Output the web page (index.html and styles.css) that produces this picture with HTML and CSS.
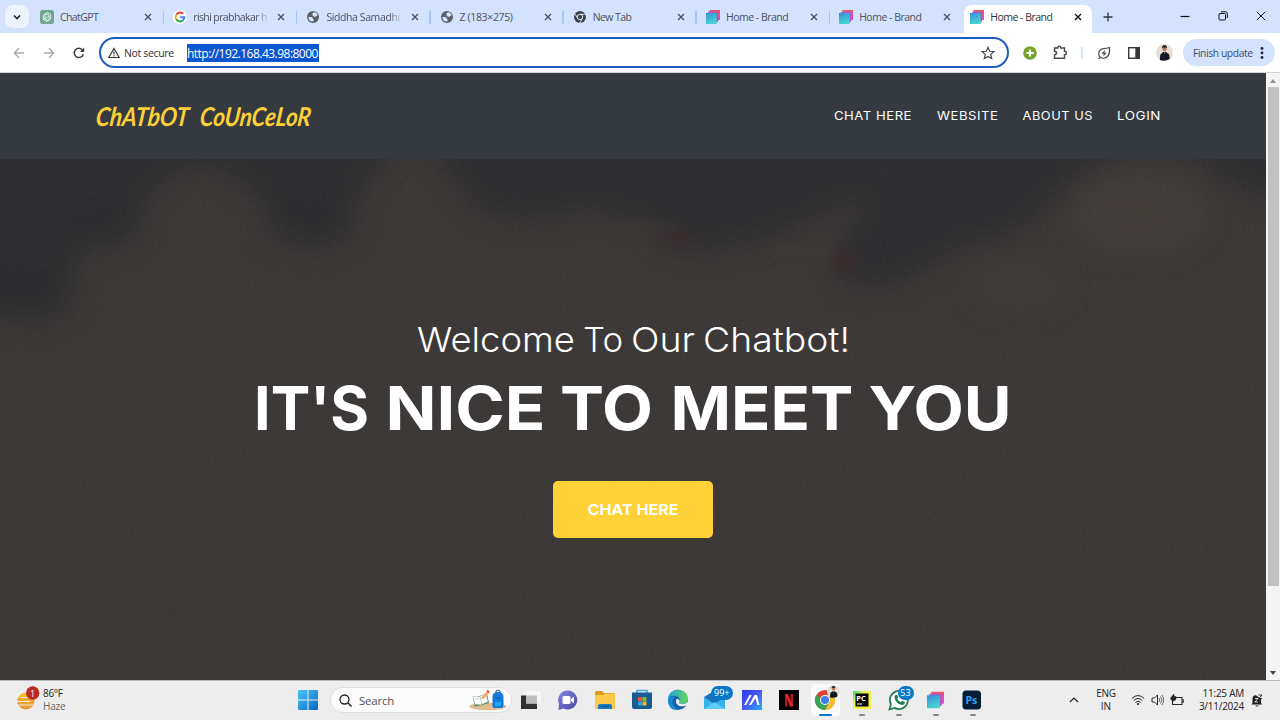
FILE: index.html
```html
<!DOCTYPE html>
<html lang="en">
<head>
<meta charset="utf-8">
<title>Home - Brand</title>
<link rel="stylesheet" href="styles.css">
</head>
<body>
<svg width="0" height="0" class="defs">
  <defs>
    <linearGradient id="gBrand" x1="0" y1="0" x2="0.4" y2="1"><stop offset="0" stop-color="#348fd8"/><stop offset="1" stop-color="#46d4cf"/></linearGradient>
    <linearGradient id="gPink" x1="0" y1="0" x2="1" y2="1"><stop offset="0" stop-color="#e8566b"/><stop offset=".5" stop-color="#e8566b"/><stop offset="1" stop-color="#d04ce0"/></linearGradient>
    <linearGradient id="gWin" x1="0" y1="0" x2="1" y2="1"><stop offset="0" stop-color="#4cc6f7"/><stop offset="1" stop-color="#0669c4"/></linearGradient>
    <linearGradient id="gSun" x1="0" y1="0" x2="0" y2="1"><stop offset="0" stop-color="#f9c62e"/><stop offset="1" stop-color="#e9861d"/></linearGradient>
    <linearGradient id="gPurple" x1="0" y1="0" x2="1" y2="1"><stop offset="0" stop-color="#8088dd"/><stop offset="1" stop-color="#4f45a6"/></linearGradient>
    <linearGradient id="gEdge" x1="0" y1="0" x2="1" y2="0"><stop offset="0" stop-color="#1c9ee0"/><stop offset="1" stop-color="#66d75c"/></linearGradient>
    <linearGradient id="gAsus" x1="0" y1="0" x2="1" y2="1"><stop offset="0" stop-color="#2a3df0"/><stop offset="0.5" stop-color="#4758f5"/><stop offset="1" stop-color="#25b0f5"/></linearGradient>
    <linearGradient id="gPc" x1="0" y1="0" x2="1" y2="1"><stop offset="0" stop-color="#3bd98a"/><stop offset="0.35" stop-color="#e9f04a"/><stop offset="1" stop-color="#f5f04a"/></linearGradient>
    <symbol id="brand" viewBox="0 0 14 14"><path d="M3.500 0H14V10H3.500z" fill="url(#gPink)"/><path d="M2 1.800h10V12H2z" fill="#a458cf"/><path d="M0 3h10.700v11H0z" fill="url(#gBrand)"/></symbol>
    <symbol id="close" viewBox="0 0 8 8"><path d="M1 1l6 6M7 1L1 7" stroke="currentColor" stroke-width="1.400" fill="none"/></symbol>
    <symbol id="globe" viewBox="0 0 14 14"><circle cx="7" cy="7" r="6" fill="#5b6069"/><path d="M2.300 7h3.200q1 .1 1 1t1 1v2.500Q3 12 2.300 7zM6.500 3.500q1-1.500 2.500-1.300 2.200 1 2.700 2.800L9.500 6.800H7.800q0-1-1.300-1.200z" fill="#d3e2fd"/></symbol>
    <symbol id="person" viewBox="0 0 18 18"><circle cx="9" cy="9" r="9" fill="#e6dfd8"/><path d="M4 17l.6-6L7.600 8.500h3L14 11l.5 5q-5 3-10.500 1z" fill="#131824"/><circle cx="9" cy="5.300" r="2.200" fill="#b57858"/><path d="M6.500 5Q6 1.200 9.200 1.400 12 1.400 11.400 5L10.500 3.800H7.500z" fill="#171213"/><path d="M8.200 8l.8 3 .9-3z" fill="#b57858"/></symbol>
  </defs>
</svg>

<div class="screen">
  <header class="tabstrip">
    <div class="tab-search"><svg width="8" height="8" viewBox="0 0 8 8"><path d="M1 2.500l3 3 3-3" stroke="#1d2026" stroke-width="1.600" fill="none"/></svg></div>
    <div class="tab"><svg class="fav" viewBox="0 0 14 14"><rect width="14" height="14" rx="2.500" fill="#74a594"/><g fill="none" stroke="#eef8f4" stroke-width=".9"><path d="M5 4.200v4.500l3.500 2M7 2.600l3.700 2.200v4M5 4.200L7 2.600M10.700 8.800L8.500 10.700M3.300 5.500v4L7 11.500 9 9.700V5.500L5.500 3.700M3.300 5.500L5 4.200M3.300 9.500L9 6.200"/></g></svg><span class="title w-a">ChatGPT</span><svg class="x"><use href="#close"/></svg></div>
    <div class="tab"><svg class="fav" viewBox="0 0 14 14"><circle cx="7" cy="7" r="7" fill="#fff"/><g fill="none" stroke-width="2"><path d="M10.200 3.700A4.400 4.400 0 0 0 3.200 4.800" stroke="#e24236"/><path d="M3.200 4.800A4.400 4.400 0 0 0 3.200 9.200" stroke="#f3b71c"/><path d="M3.200 9.200A4.400 4.400 0 0 0 9.800 10.400" stroke="#36a455"/><path d="M9.800 10.400A4.400 4.400 0 0 0 11.400 7.200H7.200" stroke="#4280ee"/></g></svg><span class="title fade w-b">rishi prabhakar h</span><svg class="x"><use href="#close"/></svg></div>
    <div class="tab"><svg class="fav"><use href="#globe"/></svg><span class="title fade w-c">Siddha Samadhi</span><svg class="x"><use href="#close"/></svg></div>
    <div class="tab"><svg class="fav"><use href="#globe"/></svg><span class="title w-d">Z (183×275)</span><svg class="x"><use href="#close"/></svg></div>
    <div class="tab"><svg class="fav" viewBox="0 0 14 14"><circle cx="7" cy="7" r="6" fill="#3d434b"/><circle cx="7" cy="7" r="2.700" fill="none" stroke="#d3e2fd"/><path d="M7 4.300h5.400M4.700 8.300L2 3.800M9.300 8.300L6.800 13" stroke="#d3e2fd"/></svg><span class="title w-f">New Tab</span><svg class="x"><use href="#close"/></svg></div>
    <div class="tab"><svg class="fav"><use href="#brand"/></svg><span class="title w-e">Home - Brand</span><svg class="x"><use href="#close"/></svg></div>
    <div class="tab nosep"><svg class="fav"><use href="#brand"/></svg><span class="title w-e">Home - Brand</span><svg class="x"><use href="#close"/></svg></div>
    <div class="tab active"><svg class="fav"><use href="#brand"/></svg><span class="title w-e">Home - Brand</span><svg class="x"><use href="#close"/></svg></div>
    <svg class="plus" width="10" height="10" viewBox="0 0 10 10"><path d="M5 .5v9M.5 5h9" stroke="#30353d" stroke-width="1.300"/></svg>
    <div class="wincontrols">
      <svg width="10" height="10" viewBox="0 0 10 10"><path d="M.5 5.500h9" stroke="#111" stroke-width="1.200"/></svg>
      <svg width="10" height="10" viewBox="0 0 10 10"><rect x="1" y="2.500" width="6.500" height="6.500" rx="1" fill="none" stroke="#111"/><path d="M3 .8h4.500q1.800 0 1.800 1.800V7" fill="none" stroke="#111"/></svg>
      <svg width="10" height="10" viewBox="0 0 10 10"><path d="M.8.8l8.400 8.400M9.200.8L.8 9.200" stroke="#111"/></svg>
    </div>
  </header>

  <div class="toolbar">
    <div class="nav">
      <svg width="12" height="12" viewBox="0 0 12 12"><path d="M11 6H1.500M6 1.300L1.300 6 6 10.700" stroke="#a6a9ad" stroke-width="1.300" fill="none"/></svg>
      <svg width="12" height="12" viewBox="0 0 12 12"><path d="M1 6h9.500M6 1.300L10.700 6 6 10.700" stroke="#a6a9ad" stroke-width="1.300" fill="none"/></svg>
      <svg width="12" height="12" viewBox="0 0 12 12"><path d="M10.300 7.200A4.600 4.600 0 1 1 9.400 3" stroke="#3b3e42" stroke-width="1.500" fill="none"/><path d="M11.200.6v4.300H7z" fill="#3b3e42"/></svg>
    </div>
    <div class="omnibox">
      <svg width="12" height="12" viewBox="0 0 12 12"><path d="M6 1.500L11.200 10.500H.8z" fill="none" stroke="#2e3135" stroke-width="1.200"/><path d="M6 4.500v3M6 8.200v1.200" stroke="#2e3135" stroke-width="1.100"/></svg>
      <span class="secure">Not secure</span>
      <span class="url">http://192.168.43.98:8000</span>
      <svg class="star" width="14" height="14" viewBox="0 0 14 14"><path d="M7 1.300l1.700 4 4.200.3-3.200 2.800 1 4.200L7 10.400l-3.700 2.200 1-4.200L1.100 5.600l4.200-.3z" fill="none" stroke="#44474b" stroke-width="1.200"/></svg>
    </div>
    <div class="tools">
      <svg width="14" height="14" viewBox="0 0 14 14"><circle cx="7" cy="7" r="6.800" fill="#78a22f"/><path d="M7 3.400v7.200M3.400 7h7.200" stroke="#fff" stroke-width="2"/></svg>
      <svg class="puzzle" width="15" height="15" viewBox="0 0 15 15"><path d="M1.500 3H4.700Q4.700 1.300 6.200 1.300T7.800 3H11.500v3.300q2 .2 2 1.700t-2 1.700v3.600H1.500V10Q3.500 9.800 3.500 8.100T1.500 6.300z" fill="none" stroke="#484b50" stroke-width="1.500"/></svg>
      <i class="divider"></i>
      <svg class="leaf" width="14" height="14" viewBox="0 0 14 14"><path d="M12.500 1.500Q13 7 11 10 8.500 13 5 12 1.500 10.800 1.800 7.500 2 3.500 6 2.700q4-.2 6.500-1.200zM3.500 11L1.500 13" fill="none" stroke="#484b50" stroke-width="1.200"/><path d="M8 4L4.500 7.700l2.300.1-.5 2.700L9.700 6.700l-2.300-.2z" fill="#484b50"/></svg>
      <svg class="panel" width="12" height="12" viewBox="0 0 12 12"><rect x=".7" y=".7" width="10.600" height="10.600" fill="none" stroke="#34373b" stroke-width="1.400"/><path d="M7.300 1H11v10H7.300z" fill="#34373b"/></svg>
      <svg class="avatar" width="17" height="17"><use href="#person"/></svg>
      <div class="update"><span>Finish update</span><svg width="4" height="12" viewBox="0 0 4 12"><g fill="#1e2a44"><circle cx="2" cy="1.500" r="1.400"/><circle cx="2" cy="6" r="1.400"/><circle cx="2" cy="10.500" r="1.400"/></g></svg></div>
    </div>
  </div>

  <div class="viewport">
    <main class="page">
      <nav class="site-nav">
        <svg class="brand" width="222" height="40" viewBox="0 0 222 40"><g transform="translate(-1 28.500) skewX(-7)"><text x="0" textLength="93" lengthAdjust="spacingAndGlyphs">ChATbOT</text><text x="104" textLength="111" lengthAdjust="spacingAndGlyphs">CoUnCeLoR</text></g></svg>
        <svg class="links" width="330" height="20" viewBox="0 0 330 20"><text x="1" y="13" textLength="78" lengthAdjust="spacingAndGlyphs">CHAT HERE</text><text x="104" y="13" textLength="61.500" lengthAdjust="spacingAndGlyphs">WEBSITE</text><text x="189.500" y="13" textLength="70.500" lengthAdjust="spacingAndGlyphs">ABOUT US</text><text x="284" y="13" textLength="44" lengthAdjust="spacingAndGlyphs">LOGIN</text></svg>
      </nav>
      <section class="hero">
        <svg class="backdrop" viewBox="0 159 1266 521" preserveAspectRatio="none">
          <defs>
            <filter id="soft" x="-20%" y="-20%" width="140%" height="140%" color-interpolation-filters="sRGB"><feGaussianBlur stdDeviation="13"/></filter>
            <filter id="spot" x="-100%" y="-100%" width="300%" height="300%" color-interpolation-filters="sRGB"><feGaussianBlur stdDeviation="6"/></filter>
            <filter id="grain" x="0" y="0" width="100%" height="100%" color-interpolation-filters="sRGB"><feTurbulence type="fractalNoise" baseFrequency=".35 .5" numOctaves="3" seed="4"/><feColorMatrix values=".5 0 0 0 .1  .5 0 0 0 .1  .5 0 0 0 .09  0 0 0 0 1"/></filter>
          </defs>
          <rect y="159" width="1266" height="521" fill="#3b3736"/>
          <g filter="url(#soft)">
            <path d="M-40 100H1310V200L1240 190 1200 155 1140 145 1085 165 1050 200 1010 235 960 245 900 282 850 285 838 265 845 235 870 205 860 195 825 212 785 232 710 250 670 245 650 220 590 208 530 220 480 210 450 170 430 140 390 150 360 185 348 235 315 248 285 235 255 190 220 168 180 165 145 195 135 235 110 248 85 245 75 260 72 300 40 322 10 315-40 320z" fill="#2c2b2e"/>
            <path d="M75 240h55v-35H60zM270 240h65v-45h-70zM-10 310h70v-50H-10z" fill="#29292d" opacity=".6"/>
            <ellipse cx="1140" cy="215" rx="65" ry="38" fill="#46413c" opacity=".65"/>
            <ellipse cx="1020" cy="285" rx="45" ry="25" fill="#413c39" opacity=".6"/>
          </g>
          <g filter="url(#spot)"><ellipse cx="678" cy="237" rx="14" ry="8" fill="#3f292b" opacity=".65"/><ellipse cx="845" cy="262" rx="13" ry="10" fill="#3d282b" opacity=".65"/><path d="M615 228h60M770 250h60" stroke="#403b39" stroke-width="4"/></g>
          <rect y="159" width="1266" height="521" filter="url(#grain)" opacity=".06"/>
        </svg>
        <div class="copy">
          <svg class="lead" width="440" height="46" viewBox="0 0 440 46"><text x="4" y="35" textLength="158" lengthAdjust="spacingAndGlyphs">Welcome</text><text x="170" y="35" textLength="40" lengthAdjust="spacingAndGlyphs">To</text><text x="218" y="35" textLength="64" lengthAdjust="spacingAndGlyphs">Our</text><text x="290" y="35" textLength="147" lengthAdjust="spacingAndGlyphs">Chatbot!</text></svg>
          <svg class="headline" width="766" height="90" viewBox="0 0 766 90"><text x="4" y="67" textLength="115" lengthAdjust="spacingAndGlyphs">IT'S</text><text x="135.500" y="67" textLength="160" lengthAdjust="spacingAndGlyphs">NICE</text><text x="310" y="67" textLength="93" lengthAdjust="spacingAndGlyphs">TO</text><text x="420.500" y="67" textLength="183" lengthAdjust="spacingAndGlyphs">MEET</text><text x="618.500" y="67" textLength="143" lengthAdjust="spacingAndGlyphs">YOU</text></svg>
          <a class="cta"><svg width="92" height="20" viewBox="0 0 92 20"><text x=".5" y="15" textLength="91" lengthAdjust="spacingAndGlyphs">CHAT HERE</text></svg></a>
        </div>
      </section>
    </main>
    <aside class="scrollbar">
      <svg width="6" height="4" viewBox="0 0 6 4"><path d="M0 4l3-4 3 4z" fill="#929292"/></svg>
      <i class="thumb"></i>
      <svg width="6" height="4" viewBox="0 0 6 4"><path d="M0 0l3 4 3-4z" fill="#444"/></svg>
    </aside>
  </div>

  <footer class="taskbar">
    <div class="weather">
      <svg width="24" height="25" viewBox="0 0 24 25"><circle cx="10" cy="15" r="8.500" fill="url(#gSun)"/><path d="M0 15.500h14M3 19h16M5 11.500h12" stroke="#ededed" stroke-width="1"/><path d="M1 13.500h15M1 17.300h17M4 21h11" stroke="#e5a542" stroke-width="1.300"/><circle cx="16.700" cy="7" r="6.700" fill="#bd2a22"/><text x="16.700" y="10.500" text-anchor="middle" class="badge-text">1</text></svg>
      <div class="stack"><span class="temp">86°F</span><span class="haze">Haze</span></div>
    </div>
    <div class="start"><svg width="20" height="20" viewBox="0 0 20 20"><path d="M0 1Q0 0 1 0h8.500v9.500H0zM10.500 0H19q1 0 1 1v8.500h-9.500zM0 10.500h9.500V20H1q-1 0-1-1zM10.500 10.500H20V19q0 1-1 1h-8.500z" fill="url(#gWin)"/></svg></div>
    <div class="search">
      <svg width="13" height="13" viewBox="0 0 13 13"><circle cx="5.500" cy="5.500" r="4.500" fill="none" stroke="#222" stroke-width="1.300"/><path d="M8.800 8.800l3.700 3.700" stroke="#222" stroke-width="1.500"/></svg>
      <span>Search</span>
      <svg class="art" width="38" height="22" viewBox="0 0 38 22"><ellipse cx="19" cy="17.500" rx="18.500" ry="3.800" fill="#e0bd91"/><path d="M4 9l7-2 7-2 2 9-7 2-7 1.500z" fill="#438458"/><path d="M4 7.500l6 .2 7-3 2 8-7 3-6-.3z" fill="#fff" stroke="#a5b0b4" stroke-width=".6"/><path d="M11 7.700l2 8M6 10l4-.3M12.500 9l4-1.500" stroke="#9aa7aa" stroke-width=".6"/><path d="M12 9l6.500-7 2 1.500L14 10z" fill="#f4a64a"/><path d="M17.500 2.500l1-1.500 2 1-.5 2z" fill="#e64b45"/><path d="M23.500 8q0-5 5.500-5t5.500 5v9q0 2-2 2h-7q-2 0-2-2z" fill="#1679dd"/><path d="M27 4V2q2-2 4 0v2" fill="none" stroke="#175395"/><path d="M26 13h6v4h-6z" fill="#23a8f1"/><path d="M26 9h6" stroke="#075ab0"/></svg>
    </div>
    <div class="apps">
      <div class="app"><svg viewBox="0 0 30 30"><path d="M5 10.500h16V24H5z" fill="#303132"/><path d="M10 6h15v12.500H10z" fill="#f6f6f6"/><path d="M10 10.500h11v8H10z" fill="#bdbdbd"/></svg></div>
      <div class="app"><svg viewBox="0 0 30 30"><path d="M15 5.500a9.500 9.500 0 1 1-4.500 18L5.500 25l.5-6A9.500 9.500 0 0 1 15 5.500z" fill="url(#gPurple)"/><rect x="9.500" y="11" width="8" height="8" rx="1.500" fill="#fff"/><path d="M18 14l3-2.500v7L18 16z" fill="#fff"/></svg></div>
      <div class="app"><svg viewBox="0 0 30 30"><path d="M5 7q0-1 1-1h6l2 2h10q1 0 1 1v3H5z" fill="#dc9c1c"/><path d="M5 10h8l2-1.500h10V23q0 1-1 1H6q-1 0-1-1z" fill="#fac94a"/><path d="M8 24v-3q0-2 2-2h10q2 0 2 2v3z" fill="#197bc4"/><path d="M11 21.500h8" stroke="#0a5291" stroke-width="1.300"/></svg></div>
      <div class="app"><svg viewBox="0 0 30 30"><path d="M10 9V5.500h10V9" fill="none" stroke="#36a9df" stroke-width="1.500"/><path d="M5 7.500h20V22q0 2-2 2H7q-2 0-2-2z" fill="#175b92"/><path d="M11 12h4v4h-4z" fill="#ef5331"/><path d="M15.500 12h4v4h-4z" fill="#83bd30"/><path d="M11 16.500h4v4h-4z" fill="#29a8e7"/><path d="M15.500 16.500h4v4h-4z" fill="#f7b92d"/></svg></div>
      <div class="app"><svg viewBox="0 0 30 30"><circle cx="15" cy="15" r="10" fill="#1463ab"/><path d="M5 15A10 10 0 0 1 25 14Q25 19 19 19q-4 0-2.500-2.500Q18 13 13 11 7 10 5 15z" fill="url(#gEdge)"/><path d="M5 15Q7 10 12 12 8 15 10 20 12 24 16 25 5 26 5 15z" fill="#188bd6"/><path d="M13.500 14q-2 5 3 7 4 1 7.500-1l2 1V14.500Q25 19 19 19q-4 0-2.500-2.500.5-2-1.500-2.500z" fill="#ededed"/></svg></div>
      <div class="app"><svg viewBox="0 0 30 30"><path d="M4 12L14 6l11 6v12H4z" fill="#1672ba"/><path d="M4 12h21v12H4z" fill="#36b2ed"/><path d="M4 12l10.500 7L25 12z" fill="#1672ba"/><path d="M4 24l10.500-7L25 24z" fill="#61cbf5"/></svg><b class="badge wide">99+</b></div>
      <div class="app"><svg viewBox="0 0 30 30"><path d="M5 5h20v20H5z" fill="url(#gAsus)"/><path d="M7 20l5.500-10h2.200L9.200 20zM12 20l5.500-10h2.500l2.500 10h-2.200l-1.800-7-4.300 7z" fill="#fff"/></svg></div>
      <div class="app"><svg viewBox="0 0 30 30"><path d="M5 5h20v20H5z" fill="#050303"/><path d="M11 9h2.500v12.500H11zM16.500 9H19v12.500h-2.500z" fill="#b41820"/><path d="M11 9h2.700L19 21.500h-2.700z" fill="#e72630"/></svg></div>
      <div class="app running current"><svg viewBox="0 0 30 30"><circle cx="15" cy="15" r="10" fill="#e14034"/><path d="M15 15L6.300 10A10 10 0 0 0 15 25l5-9z" fill="#36a452"/><path d="M15 10h8.700A10 10 0 0 1 15 25l4.500-8z" fill="#f6bf2b"/><circle cx="15" cy="15" r="5" fill="#fff"/><circle cx="15" cy="15" r="4" fill="#3f7fe6"/></svg><svg class="mini"><use href="#person"/></svg></div>
      <div class="app running"><svg viewBox="0 0 30 30"><path d="M6 6h18v18H6z" fill="url(#gPc)"/><path d="M8.500 8.500h13v13h-13z" fill="#080908"/><path d="M10 19h5" stroke="#fff"/><text x="9.300" y="15.500" class="pc">PC</text></svg></div>
      <div class="app running"><svg viewBox="0 0 30 30"><path d="M5.500 24.500l1.400-5.300a9 9 0 1 1 3.600 3.700z" fill="#fff" stroke="#277b52" stroke-width="1.800"/><path d="M11.500 10q1-.8 1.800.2l1 2-1 1.500q1 2.500 3.600 3.300l1.500-1.300 2.400 1.200q.2 3-2.800 3Q11 18.500 10.500 12q0-1.200 1-2z" fill="#277b52"/></svg><b class="badge">53</b></div>
      <div class="app running"><svg viewBox="0 0 30 30"><use href="#brand" x="6" y="6.500" width="17" height="17"/></svg></div>
      <div class="app running"><svg viewBox="0 0 30 30"><rect x="5.500" y="5.500" width="18.500" height="19" rx="3.500" fill="#061d35"/><text x="8.500" y="18.500" class="ps">Ps</text></svg></div>
    </div>
    <div class="tray">
      <svg class="chev" width="10" height="6" viewBox="0 0 10 6"><path d="M1 5l4-4 4 4" fill="none" stroke="#222" stroke-width="1.200"/></svg>
      <div class="lang"><span class="eng">ENG</span><span>IN</span></div>
      <div class="status">
        <svg width="14" height="12" viewBox="0 0 14 12"><g fill="none" stroke="#292929"><path d="M.8 4.500Q7-1.500 13.200 4.500M2.700 6.500Q7 2.500 11.300 6.500M4.500 8.400Q7 6 9.500 8.400"/></g><circle cx="7" cy="10" r="1.100" fill="#292929"/></svg>
        <svg width="13" height="12" viewBox="0 0 13 12"><path d="M1 4h2.500L6.500 1v10L3.500 8H1z" fill="none" stroke="#292929"/><path d="M8 4q1.500 2 0 4M9.500 2.500q3 3.500 0 7M11 1q3.500 5 0 10" fill="none" stroke="#444" stroke-width=".8"/></svg>
        <svg width="14" height="12" viewBox="0 0 14 12"><path d="M5 3.500h7v7H2.500V7" fill="none" stroke="#292929" stroke-width="1.100"/><path d="M12.500 5.500h1v3h-1M1 3.500L4 0v2.500h2V5Q5 7.500 2.500 7L.5 5z" fill="#222" stroke="#222" stroke-width=".5"/></svg>
      </div>
      <div class="clock"><span class="time">11:25 AM</span><span class="date">3/11/2024</span></div>
      <svg class="bell" width="12" height="13" viewBox="0 0 12 13"><path d="M1.500 9V5Q1.500 1 5 1.300L10 5v4l1.200 1.500H.5z" fill="#222"/><path d="M4 11.500h4q-2 2-4 0z" fill="#222"/><path d="M4 4.500h3L4 8h3" stroke="#fff" fill="none" stroke-width=".8"/><path d="M7.500 1H11L8 4.500h3" stroke="#222" fill="none" stroke-width=".9"/></svg>
    </div>
  </footer>
</div>
</body>
</html>
```
FILE: styles.css
```css
* { box-sizing: border-box; }
body { margin: 0; overflow: hidden; font-family: "Open Sans", "Noto Sans", sans-serif; }
svg { display: block; flex: none; }
.defs { position: absolute; }
.screen { width: 1280px; height: 720px; display: grid; grid-template-rows: 33px 40px 607px 40px; background: #fff; }

.tabstrip { background: #d3e2fd; display: flex; padding-left: 5px; }
.tab-search { width: 24px; height: 23px; margin: 5px 2px 0 0; border-radius: 8px; background: #edf3fe; display: grid; place-items: center; }
.tab { width: 133.2px; display: flex; align-items: center; padding: 1px 12px 0 9px; position: relative; color: #4c525e; flex: none; }
.tab::after { content: ""; position: absolute; right: 0; top: 11px; width: 1.5px; height: 13px; background: #a9c7fa; }
.tab.nosep::after, .tab.active::after { display: none; }
.fav { width: 14px; height: 14px; }
.title { flex: none; margin-left: 6px; width: 76px; font-size: 10.5px; line-height: 16px; white-space: nowrap; }
.x { width: 8px; height: 8px; margin-left: auto; }
.fade { -webkit-mask-image: linear-gradient(90deg, #000 82%, transparent 102%); }
.w-a { letter-spacing: -.6px; }
.w-b { letter-spacing: -.6px; }
.w-c { letter-spacing: -.4px; }
.w-d { letter-spacing: -.36px; }
.w-e { letter-spacing: -.5px; }
.w-f { letter-spacing: -.6px; }
.tab.active { width: 128px; margin-left: .9px; margin-top: 5px; padding: 0 10px 4px 6px; background: #fff; border-radius: 8px 8px 0 0; color: #30343b; }
.active .x { color: #111; }
.plus { margin: 12px 0 0 11px; }
.wincontrols { margin: 11px 14px 0 auto; display: flex; gap: 28.500px; }
.wincontrols svg:first-child { margin-right: -1px; }

.toolbar { display: flex; align-items: center; background: #fff; border-bottom: 1px solid #cfd2d6; }
.nav { display: flex; gap: 18px; padding-left: 12.500px; width: 99px; }
.omnibox { width: 910px; height: 31px; border: 2px solid #1f5bc4; border-radius: 16px; display: flex; align-items: center; padding: 0 12px 0 7px; color: #30343a; }
.secure { margin-left: 4px; width: 63px; font-size: 10.5px; letter-spacing: -.35px; white-space: nowrap; }
.url { height: 18px; line-height: 19px; width: 132px; background: #0b57d0; color: #fff; font-size: 12px; letter-spacing: -.52px; white-space: nowrap; }
.star { margin-left: auto; }
.tools { display: flex; align-items: center; padding-left: 14px; }
.puzzle { margin-left: 16px; }
.divider { width: 2px; height: 12px; background: #d5e3fb; margin-left: 13px; }
.leaf { margin-left: 14px; }
.panel { margin-left: 17px; }
.avatar { margin-left: 16px; }
.update { width: 92px; height: 27px; border-radius: 14px; margin-left: 10px; background: #d3e2fd; color: #3e4b6e; display: flex; align-items: center; padding: 0 11px 0 10px; justify-content: space-between; font-size: 10.3px; letter-spacing: -.4px; white-space: nowrap; }

.viewport { display: grid; grid-template-columns: 1266px 14px; }
.page { display: grid; grid-template-rows: 86px 521px; }
.site-nav { background: #343a40; display: flex; align-items: center; justify-content: space-between; padding: 0 103px 0 96px; border-top: 1px solid #3b3f45; }
.brand { overflow: visible; }
.brand text { fill: #fdd037; font: italic 700 26px "Lato", sans-serif; }
.links text { fill: #fff; font: 400 12px "Inter", sans-serif; letter-spacing: .5px; }
.hero { display: grid; }
.backdrop { grid-area: 1 / 1; width: 1266px; height: 521px; }
.copy { grid-area: 1 / 1; z-index: 1; display: flex; flex-direction: column; align-items: center; padding-top: 158px; }
.copy text { fill: #fff; font-family: "Inter", sans-serif; }
.lead text { font-size: 34px; font-weight: 300; }
.headline text { font-size: 61px; font-weight: 700; }
.cta { width: 160px; height: 57px; margin-top: 28px; border-radius: 5px; background: #fed136; display: grid; place-items: center; }
.cta text { font-size: 15px; font-weight: 700; }
.scrollbar { background: #f4f4f4; display: flex; flex-direction: column; align-items: center; padding: 6px 0 5px; }
.thumb { width: 11px; height: 499px; margin-top: 4px; background: #c1c1c1; }
.scrollbar svg:last-child { margin-top: auto; }

.taskbar { background: #ededed; border-top: 1px solid #bbb7bb; display: flex; align-items: center; color: #222; white-space: nowrap; padding-bottom: 1px; }
.weather { width: 298px; padding-left: 16px; display: flex; align-items: center; gap: 3px; }
.weather svg { margin-top: -4px; }
.stack, .lang, .clock { display: flex; flex-direction: column; font-size: 10px; line-height: 13px; }
.temp { letter-spacing: -.3px; }
.haze { color: #666; letter-spacing: -.2px; }
.badge-text { font: 9px "Open Sans", sans-serif; fill: #fff; }
.start { width: 32px; }
.search { width: 182px; height: 26px; border-radius: 13px; background: #fbfbfb; border: 1px solid #dfdfdf; display: flex; align-items: center; padding: 0 4px 0 8px; font-size: 11.500px; color: #555; }
.search span { margin-left: 7px; letter-spacing: -.2px; }
.art { margin-left: auto; }
.apps { display: grid; grid-template-columns: repeat(13, 36.750px); width: 478px; margin-left: 1px; }
.app { height: 32px; display: grid; place-items: center; position: relative; }
.app > svg:first-child { width: 30px; height: 30px; }
.current::before { content: ""; position: absolute; inset: 0 4px; border-radius: 4px; background: #fafafa; }
.current svg { position: relative; }
.running::after { content: ""; position: absolute; bottom: 0; left: 15.500px; width: 6px; height: 2px; border-radius: 1px; background: #888; }
.current::after { left: 12px; width: 13px; background: #0877c6; height: 2.500px; }
.app .mini { position: absolute; width: 13px; height: 13px; right: 4px; top: 1px; }
.badge { position: absolute; top: 2px; left: 17px; width: 16px; height: 14px; border-radius: 7px; background: #0877c6; color: #fff; font-size: 9px; line-height: 14px; font-weight: 400; text-align: center; }
.badge.wide { left: 14px; width: 22px; }
.pc { font: 700 7.500px "Open Sans", sans-serif; fill: #fff; }
.ps { font: 700 10.500px "Open Sans", sans-serif; fill: #35a4f6; }
.tray { display: flex; align-items: center; flex: 1; padding: 0 17px 0 78px; }
.lang { align-items: center; width: 26px; margin-left: 14px; }
.eng { letter-spacing: -.3px; }
.status { display: flex; gap: 6px; margin-left: 12px; }
.status svg { margin-top: -1px; }
.clock { align-items: flex-end; width: 50px; margin-left: auto; letter-spacing: -.25px; }
.bell { margin-left: 7px; }
```
